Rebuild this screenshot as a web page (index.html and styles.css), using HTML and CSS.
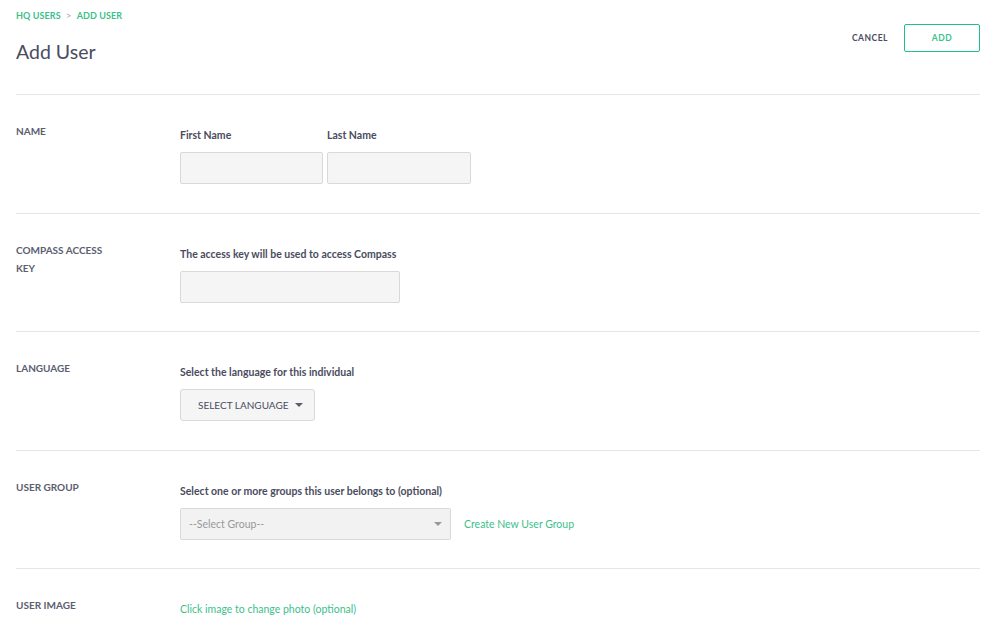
FILE: index.html
```html
<!DOCTYPE html>
<html lang="en">
<head>
    <meta charset="UTF-8">
    <title>Add User</title>
    <link rel="stylesheet" href="styles.css">
</head>
<body>
    <div class="page">
        <!-- header -->
        <div class="header">
            <div class="title-block">
                <div class="breadcrumb">
                    <span>HQ Users</span>
                    <span class="sep">&gt;</span>
                    <span>Add User</span>
                </div>
                <h1>Add User</h1>
            </div>
            <div class="actions">
                <span class="cancel">Cancel</span>
                <button class="add-btn">Add</button>
            </div>
        </div>

        <!-- name -->
        <div class="section">
            <div class="label">Name</div>
            <div class="field">
                <div class="name-row">
                    <div class="name-col">
                        <div class="hint">First Name</div>
                        <input class="input first" type="text">
                    </div>
                    <div class="name-col">
                        <div class="hint">Last Name</div>
                        <input class="input last" type="text">
                    </div>
                </div>
            </div>
        </div>

        <!-- access key -->
        <div class="section">
            <div class="label">Compass Access<br>Key</div>
            <div class="field">
                <div class="hint">The access key will be used to access Compass</div>
                <input class="input key" type="text">
            </div>
        </div>

        <!-- language -->
        <div class="section">
            <div class="label">Language</div>
            <div class="field">
                <div class="hint">Select the language for this individual</div>
                <div class="lang-btn">Select Language <span class="caret"></span></div>
            </div>
        </div>

        <!-- user group -->
        <div class="section">
            <div class="label">User Group</div>
            <div class="field">
                <div class="hint">Select one or more groups this user belongs to (optional)</div>
                <div class="group-row">
                    <div class="group-select">--Select Group-- <span class="caret"></span></div>
                    <a class="link">Create New User Group</a>
                </div>
            </div>
        </div>

        <!-- image -->
        <div class="section">
            <div class="label">User Image</div>
            <div class="field">
                <div class="hint link">Click image to change photo (optional)</div>
            </div>
        </div>
    </div>
</body>
</html>
```

FILE: styles.css
```css
body {
    margin: 0;
    background: #fff;
    font-family: "Lato", "Open Sans", sans-serif;
    color: #4b4d5c;
}

.page {
    padding: 0 22px 0 16px;
}

/* header */
.header {
    display: flex;
    justify-content: space-between;
    align-items: flex-start;
    height: 94px;
    border-bottom: 1px solid #e6e6e6;
}

.breadcrumb {
    margin-top: 9px;
    font-size: 9px;
    font-weight: bold;
    letter-spacing: 0.1px;
    text-transform: uppercase;
    color: #3cbf8b;
    display: flex;
    align-items: center;
    gap: 5px;
}

.breadcrumb .sep {
    color: #aaa;
    font-weight: normal;
    font-size: 10px;
}

h1 {
    margin: 19px 0 0;
    font-size: 19.5px;
    font-weight: normal;
    color: #4a4c5e;
}

.actions {
    display: flex;
    align-items: center;
    margin-top: 24px;
    gap: 16px;
}

.cancel {
    font-size: 8.5px;
    font-weight: bold;
    letter-spacing: 0.5px;
    text-transform: uppercase;
    color: #4a4c5e;
}

.add-btn {
    width: 76px;
    height: 28px;
    background: #fff;
    border: 1.5px solid #1fc186;
    border-radius: 2px;
    font-family: inherit;
    font-size: 8.5px;
    font-weight: bold;
    letter-spacing: 0.5px;
    text-transform: uppercase;
    color: #3cbf8b;
}

/* sections */
.section {
    display: grid;
    grid-template-columns: 164px 1fr;
    padding: 28px 0 28.5px;
    border-bottom: 1px solid #e6e6e6;
}

.section:last-child {
    border-bottom: none;
}

.label {
    margin-top: -1px;
    font-size: 10px;
    font-weight: bold;
    text-transform: uppercase;
    line-height: 18px;
    color: #5b5e70;
}

.field {
    padding-top: 4px;
}

.hint {
    font-size: 10.5px;
    font-weight: bold;
    line-height: 16px;
    color: #4a4c5e;
    margin-bottom: 9px;
}

.hint.link {
    font-weight: normal;
    color: #3cbf8b;
}

.name-row {
    display: flex;
    gap: 4px;
}

.input {
    display: block;
    box-sizing: border-box;
    height: 32px;
    background: #f5f5f5;
    border: 1px solid #d9d9d9;
    border-radius: 2px;
}

.first { width: 143px; }
.last { width: 144px; }
.key { width: 220px; }

.lang-btn {
    box-sizing: border-box;
    width: 135px;
    height: 32px;
    display: flex;
    align-items: center;
    padding-left: 17px;
    background: #f5f5f5;
    border: 1px solid #d9d9d9;
    border-radius: 3px;
    font-size: 10px;
    text-transform: uppercase;
    color: #4a4c5e;
}

.caret {
    width: 0;
    height: 0;
    border-left: 4px solid transparent;
    border-right: 4px solid transparent;
    border-top: 4px solid #5b5e70;
    margin-left: auto;
    margin-right: 11px;
}

.group-row {
    display: flex;
    align-items: center;
    gap: 13px;
}

.group-select {
    box-sizing: border-box;
    width: 271px;
    height: 32px;
    display: flex;
    align-items: center;
    padding-left: 8px;
    background: #f2f2f2;
    border: 1px solid #d9d9d9;
    border-radius: 2px;
    font-size: 10.5px;
    color: #999;
}

.group-select .caret {
    border-top-color: #999;
    margin-right: 8px;
}

.link {
    font-size: 10.5px;
    color: #3cbf8b;
}
```
